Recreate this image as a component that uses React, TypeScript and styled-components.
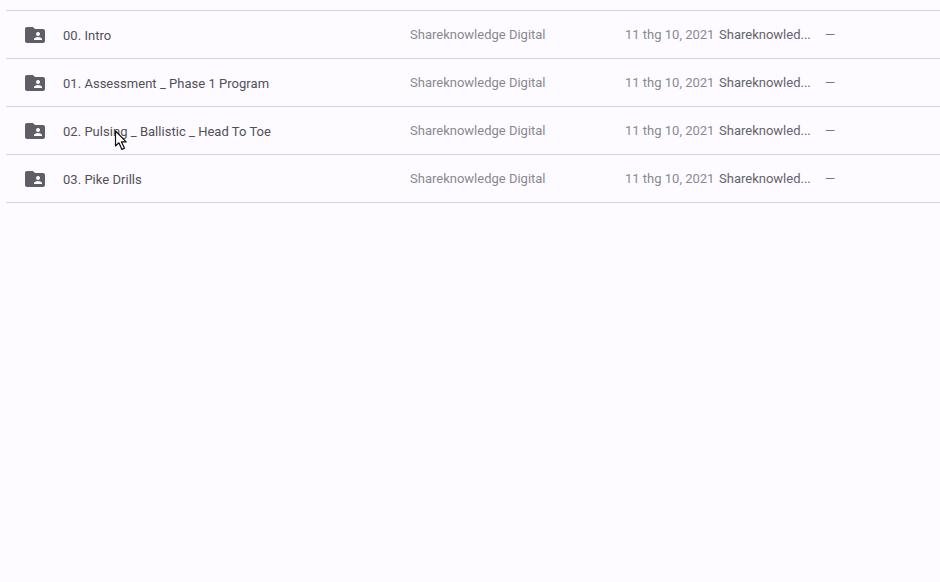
import React from 'react';
import styled, {createGlobalStyle} from 'styled-components';

type FolderType = {
    name: string
    hasCursor?: boolean
}

const folders: FolderType[] = [
    {name: '00. Intro'},
    {name: '01. Assessment _ Phase 1 Program'},
    {name: '02. Pulsing _ Ballistic _ Head To Toe', hasCursor: true},
    {name: '03. Pike Drills'},
]

const GlobalStyle = createGlobalStyle`
  html, body {
    margin: 0;
    padding: 0;
    background: #fdfbff;
  }

  body {
    font-family: Roboto, "Liberation Sans", sans-serif;
    overflow: hidden;
  }
`

const Page = styled.div`
  width: 940px;
  height: 582px;
  padding: 10px 0 0 6px;
  box-sizing: border-box;
  background: #fdfbff;
`

const List = styled.div`
  display: flex;
  flex-direction: column;
  border-bottom: 1px solid #d6d5d9;
`

const Row = styled.div`
  position: relative;
  display: grid;
  grid-template-columns: 57px 347px 215px 94px 107px 1fr;
  align-items: center;
  height: 47px;
  border-top: 1px solid #d6d5d9;
  font-size: 13px;
  white-space: nowrap;
`

const IconCell = styled.div`
  display: flex;
  padding-left: 19px;
`

const Name = styled.div`
  padding-top: 2px;
  letter-spacing: 0.03px;
  color: #505058;
`

const Owner = styled.div`
  color: #8b8990;
`

const Modified = styled.div`
  color: #8b8990;
`

const ModifiedBy = styled.div`
  color: #65636b;
`

const Size = styled.div`
  margin-left: -1px;
  color: #77757c;
`

const Pointer = styled.svg`
  position: absolute;
  left: 108px;
  top: 23px;
`

const FolderIcon = () => (
    <svg width="20" height="16" viewBox="0 0 20 16">
        <path
            fill="#5f5e66"
            d="M2 0h6l2 2h8a2 2 0 0 1 2 2v10a2 2 0 0 1-2 2H2a2 2 0 0 1-2-2V2a2 2 0 0 1 2-2z"
        />
        <circle cx="13" cy="7" r="2" fill="#fdfbff"/>
        <path fill="#fdfbff" d="M9 13v-1c0-1.300 2.600-2 4-2s4 .7 4 2v1z"/>
    </svg>
)

const CursorIcon = () => (
    <Pointer width="14" height="21" viewBox="0 0 14 21">
        <path
            fill="#fff"
            stroke="#111"
            strokeWidth="1.2"
            strokeLinejoin="round"
            d="M1.500 1v15l3.400-3.200 3 6.600 2.600-1.200-3-6.300h4.700z"
        />
    </Pointer>
)

const FolderRow = ({name, hasCursor}: FolderType) => (
    <Row>
        <IconCell><FolderIcon/></IconCell>
        <Name>{name}</Name>
        <Owner>Shareknowledge Digital</Owner>
        <Modified>11 thg 10, 2021</Modified>
        <ModifiedBy>Shareknowled...</ModifiedBy>
        <Size>—</Size>
        {hasCursor && <CursorIcon/>}
    </Row>
)

export default function App() {
    return (
        <Page>
            <GlobalStyle/>
            <List>
                {folders.map(f => <FolderRow key={f.name} {...f}/>)}
            </List>
        </Page>
    )
}
